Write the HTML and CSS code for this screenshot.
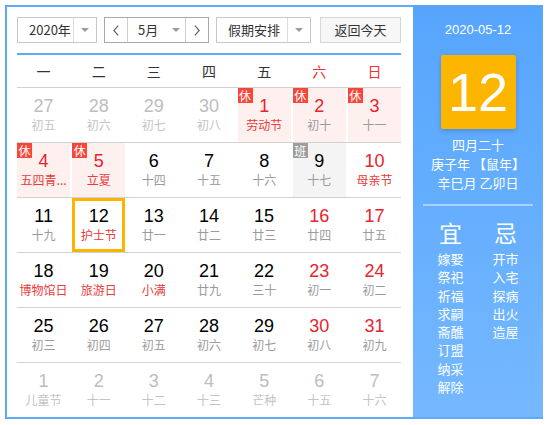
FILE: index.html
```html
<!DOCTYPE html>
<html lang="zh-CN">
<head>
<meta charset="utf-8">
<title>万年历</title>
<link rel="stylesheet" href="styles.css">
</head>
<body>
<div class="cal">
  <div class="main">
    <div class="toolbar">
      <div class="sel sel-year"><span class="sel-text">2020年</span><span class="sel-arrow"><i class="tri"></i></span></div>
      <div class="sel sel-month">
        <span class="step"><svg width="6" height="11" viewBox="0 0 6 11"><polyline points="5.2,0.6 0.8,5.5 5.2,10.4" fill="none" stroke="#666" stroke-width="1.2"/></svg></span>
        <span class="month-mid"><span class="sel-text">5月</span><i class="tri"></i></span>
        <span class="step step-next"><svg width="6" height="11" viewBox="0 0 6 11"><polyline points="0.8,0.6 5.2,5.5 0.8,10.4" fill="none" stroke="#666" stroke-width="1.2"/></svg></span>
      </div>
      <div class="sel sel-holiday"><span class="sel-text">假期安排</span><span class="sel-arrow"><i class="tri"></i></span></div>
      <div class="btn-today">返回今天</div>
    </div>
    <div class="rule"></div>
    <div class="week-head">
      <div>一</div><div>二</div><div>三</div><div>四</div><div>五</div><div class="we">六</div><div class="we">日</div>
    </div>

    <div class="week">
      <div class="day other"><span class="num">27</span><span class="lunar">初五</span></div>
      <div class="day other"><span class="num">28</span><span class="lunar">初六</span></div>
      <div class="day other"><span class="num">29</span><span class="lunar">初七</span></div>
      <div class="day other"><span class="num">30</span><span class="lunar">初八</span></div>
      <div class="day rest red"><i class="badge">休</i><span class="num">1</span><span class="lunar fest">劳动节</span></div>
      <div class="day rest red"><i class="badge">休</i><span class="num">2</span><span class="lunar">初十</span></div>
      <div class="day rest red"><i class="badge">休</i><span class="num">3</span><span class="lunar">十一</span></div>
    </div>

    <div class="week">
      <div class="day rest red"><i class="badge">休</i><span class="num">4</span><span class="lunar fest">五四青...</span></div>
      <div class="day rest red"><i class="badge">休</i><span class="num">5</span><span class="lunar fest">立夏</span></div>
      <div class="day"><span class="num">6</span><span class="lunar">十四</span></div>
      <div class="day"><span class="num">7</span><span class="lunar">十五</span></div>
      <div class="day"><span class="num">8</span><span class="lunar">十六</span></div>
      <div class="day work"><i class="badge badge-work">班</i><span class="num">9</span><span class="lunar">十七</span></div>
      <div class="day red"><span class="num">10</span><span class="lunar fest">母亲节</span></div>
    </div>

    <div class="week">
      <div class="day"><span class="num">11</span><span class="lunar">十九</span></div>
      <div class="day today"><span class="num">12</span><span class="lunar fest">护士节</span></div>
      <div class="day"><span class="num">13</span><span class="lunar">廿一</span></div>
      <div class="day"><span class="num">14</span><span class="lunar">廿二</span></div>
      <div class="day"><span class="num">15</span><span class="lunar">廿三</span></div>
      <div class="day red"><span class="num">16</span><span class="lunar">廿四</span></div>
      <div class="day red"><span class="num">17</span><span class="lunar">廿五</span></div>
    </div>

    <div class="week">
      <div class="day"><span class="num">18</span><span class="lunar fest">博物馆日</span></div>
      <div class="day"><span class="num">19</span><span class="lunar fest">旅游日</span></div>
      <div class="day"><span class="num">20</span><span class="lunar fest">小满</span></div>
      <div class="day"><span class="num">21</span><span class="lunar">廿九</span></div>
      <div class="day"><span class="num">22</span><span class="lunar">三十</span></div>
      <div class="day red"><span class="num">23</span><span class="lunar">初一</span></div>
      <div class="day red"><span class="num">24</span><span class="lunar">初二</span></div>
    </div>

    <div class="week">
      <div class="day"><span class="num">25</span><span class="lunar">初三</span></div>
      <div class="day"><span class="num">26</span><span class="lunar">初四</span></div>
      <div class="day"><span class="num">27</span><span class="lunar">初五</span></div>
      <div class="day"><span class="num">28</span><span class="lunar">初六</span></div>
      <div class="day"><span class="num">29</span><span class="lunar">初七</span></div>
      <div class="day red"><span class="num">30</span><span class="lunar">初八</span></div>
      <div class="day red"><span class="num">31</span><span class="lunar">初九</span></div>
    </div>

    <div class="week">
      <div class="day other"><span class="num">1</span><span class="lunar">儿童节</span></div>
      <div class="day other"><span class="num">2</span><span class="lunar">十一</span></div>
      <div class="day other"><span class="num">3</span><span class="lunar">十二</span></div>
      <div class="day other"><span class="num">4</span><span class="lunar">十三</span></div>
      <div class="day other"><span class="num">5</span><span class="lunar">芒种</span></div>
      <div class="day other"><span class="num">6</span><span class="lunar">十五</span></div>
      <div class="day other"><span class="num">7</span><span class="lunar">十六</span></div>
    </div>
  </div>

  <div class="panel">
    <div class="p-date">2020-05-12</div>
    <div class="p-big">12</div>
    <div class="p-info">
      <div>四月二十</div>
      <div>庚子年 【鼠年】</div>
      <div>辛巳月 乙卯日</div>
    </div>
    <div class="p-rule"></div>
    <div class="yiji">
      <div class="yj-col">
        <div class="yj-title">宜</div>
        <div>嫁娶</div><div>祭祀</div><div>祈福</div><div>求嗣</div><div>斋醮</div><div>订盟</div><div>纳采</div><div>解除</div>
      </div>
      <div class="yj-col">
        <div class="yj-title">忌</div>
        <div>开市</div><div>入宅</div><div>探病</div><div>出火</div><div>造屋</div>
      </div>
    </div>
  </div>
</div>
</body>
</html>
```

FILE: styles.css
```css
body {
  margin: 5px;
  background: #fff;
  font-family: "Noto Sans CJK SC", "Liberation Sans", sans-serif;
}

.cal {
  display: flex;
  width: 538px;
  height: 414px;
  box-sizing: border-box;
  border-bottom: 2px solid #5ea9f8;
}

.main {
  width: 408px;
  box-sizing: border-box;
  border-left: 2px solid #5ea9f8;
  border-top: 2px solid #5ea9f8;
  padding: 10px 12px 0 10px;
}

/* toolbar */
.toolbar {
  display: flex;
  height: 26px;
  margin-bottom: 10px;
}

.sel {
  display: flex;
  box-sizing: border-box;
  height: 26px;
  border: 1px solid #c8c8c8;
  font-size: 13px;
  color: #333;
  line-height: 24px;
  margin-right: 7px;
}

.sel-text {
  white-space: nowrap;
}

.tri {
  display: block;
  width: 0;
  height: 0;
  border-left: 4px solid transparent;
  border-right: 4px solid transparent;
  border-top: 4px solid #9a9a9a;
}

.sel-arrow {
  display: flex;
  align-items: center;
  justify-content: center;
  border-left: 1px solid #dcdcdc;
}

.sel-year {
  width: 80px;
}
.sel-year .sel-text {
  width: 55px;
  padding-left: 11px;
  box-sizing: border-box;
}
.sel-year .sel-arrow {
  flex: 1;
}

.sel-month {
  width: 105px;
  border-color: #a8a8a8;
}
.step {
  width: 22px;
  display: flex;
  align-items: center;
  justify-content: center;
  border-right: 1px solid #cfcfcf;
}
.step-next {
  border-right: none;
  border-left: 1px solid #cfcfcf;
}
.month-mid {
  flex: 1;
  display: flex;
  align-items: center;
  padding-left: 10px;
  gap: 14px;
}

.sel-holiday {
  width: 95px;
  margin-right: 9px;
}
.sel-holiday .sel-text {
  width: 70px;
  padding-left: 11px;
  box-sizing: border-box;
}
.sel-holiday .sel-arrow {
  flex: 1;
}

.btn-today {
  width: 81px;
  height: 26px;
  box-sizing: border-box;
  border: 1px solid #d6d6d6;
  background: #f7f7f7;
  font-size: 13px;
  line-height: 24px;
  text-align: center;
  color: #333;
}

.rule {
  height: 2px;
  background: #5ea9f8;
}

/* week header */
.week-head {
  display: grid;
  grid-template-columns: repeat(7, 1fr);
  column-gap: 2px;
  height: 32px;
  line-height: 32px;
  text-align: center;
  font-size: 14px;
  color: #333;
}
.week-head .we {
  color: #f23030;
}

/* days */
.week {
  display: grid;
  grid-template-columns: repeat(7, 1fr);
  column-gap: 2px;
  height: 55px;
  box-sizing: border-box;
  border-top: 1px solid #d2d2d2;
}

.day {
  position: relative;
  display: flex;
  flex-direction: column;
  align-items: center;
  justify-content: center;
  min-width: 0;
  padding-bottom: 2px;
  box-sizing: border-box;
}

.num {
  font-family: "Liberation Sans", Arial, sans-serif;
  font-size: 18px;
  line-height: 22px;
  color: #000;
}

.lunar {
  font-size: 12px;
  line-height: 16px;
  color: #9b9b9b;
  white-space: nowrap;
}

.red .num {
  color: #e8232b;
}
.lunar.fest {
  color: #e83a3a;
}

.other .num {
  color: #bdbdbd;
}
.other .lunar {
  color: #c4c4c4;
}

.rest {
  background: #fff0f0;
}
.work {
  background: #f4f4f4;
}

.today {
  border: 3px solid #fbb400;
}

.badge {
  position: absolute;
  left: 0;
  top: 0;
  width: 15px;
  height: 15px;
  background: #f8473a;
  color: #fff;
  font-style: normal;
  font-size: 12px;
  line-height: 15px;
  text-align: center;
}
.badge-work {
  background: #9d9d9d;
}

/* right panel */
.panel {
  width: 130px;
  background: linear-gradient(to bottom, #56a5fd, #75b8ff);
  color: #fff;
  text-align: center;
  padding-top: 15px;
  box-sizing: border-box;
}

.p-date {
  font-family: "Liberation Sans", Arial, sans-serif;
  font-size: 13px;
  line-height: 20px;
}

.p-big {
  width: 75px;
  height: 74px;
  margin: 15px auto 0;
  background: #fdb600;
  border-radius: 2px;
  box-shadow: 0 2px 4px rgba(0, 60, 140, 0.25);
  font-family: "Liberation Sans", Arial, sans-serif;
  font-size: 54px;
  line-height: 74px;
}

.p-info {
  margin-top: 6px;
  font-size: 13px;
  line-height: 19px;
  white-space: nowrap;
}

.p-rule {
  height: 2px;
  margin: 12px 10px 0;
  background: rgba(255, 255, 255, 0.45);
}

.yiji {
  display: flex;
  justify-content: center;
  margin-top: 13px;
}

.yj-col {
  width: 55px;
  font-size: 13px;
  line-height: 18.3px;
}

.yj-title {
  font-size: 23px;
  line-height: 26px;
  margin-bottom: 5px;
}
```
